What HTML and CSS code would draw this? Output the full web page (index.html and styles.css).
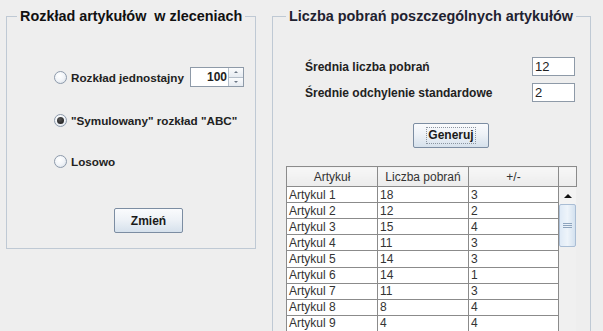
FILE: index.html
```html
<!DOCTYPE html>
<html lang="pl">
<head>
<meta charset="UTF-8" />
<title>Generator zleceń</title>
<link rel="stylesheet" href="styles.css">
</head>
<body>
<div class="window">
  <fieldset class="panel panel-left">
    <legend>Rozkład artykułów&nbsp; w zleceniach</legend>
    <div class="choices">
      <label class="choice row-uniform">
        <span class="radio"></span>
        <span class="choice-text">Rozkład jednostajny</span>
        <span class="spinner">
          <span class="spinner-value">100</span>
          <span class="spinner-arrows">
            <span class="arrow-btn"><span class="tri tri-up"></span></span>
            <span class="arrow-btn"><span class="tri tri-down"></span></span>
          </span>
        </span>
      </label>
      <label class="choice row-abc">
        <span class="radio checked"></span>
        <span class="choice-text">"Symulowany" rozkład "ABC"</span>
      </label>
      <label class="choice row-random">
        <span class="radio"></span>
        <span class="choice-text">Losowo</span>
      </label>
    </div>
    <div class="btn-row btn-row-left">
      <button class="btn btn-change">Zmień</button>
    </div>
  </fieldset>

  <fieldset class="panel panel-right">
    <legend>Liczba pobrań poszczególnych artykułów</legend>
    <div class="params">
      <div class="param">
        <span class="param-label">Średnia liczba pobrań</span>
        <span class="field">12</span>
      </div>
      <div class="param">
        <span class="param-label">Średnie odchylenie standardowe</span>
        <span class="field">2</span>
      </div>
    </div>
    <div class="btn-row btn-row-right">
      <button class="btn btn-generate"><span class="focus">Generuj</span></button>
    </div>
    <table class="grid">
      <colgroup>
        <col class="c1"><col class="c2"><col class="c3"><col class="c4">
      </colgroup>
      <thead>
        <tr><th>Artykuł</th><th>Liczba pobrań</th><th>+/-</th><th class="corner"></th></tr>
      </thead>
      <tbody>
        <tr><td>Artykul 1</td><td>18</td><td>3</td>
          <td class="scroll" rowspan="9">
            <div class="scrollbar">
              <div class="sb-up"><span class="sb-tri"></span></div>
              <div class="sb-thumb"><span class="grip"></span></div>
              <div class="sb-track"></div>
            </div>
          </td></tr>
        <tr><td>Artykul 2</td><td>12</td><td>2</td></tr>
        <tr><td>Artykul 3</td><td>15</td><td>4</td></tr>
        <tr><td>Artykul 4</td><td>11</td><td>3</td></tr>
        <tr><td>Artykul 5</td><td>14</td><td>3</td></tr>
        <tr><td>Artykul 6</td><td>14</td><td>1</td></tr>
        <tr><td>Artykul 7</td><td>11</td><td>3</td></tr>
        <tr><td>Artykul 8</td><td>8</td><td>4</td></tr>
        <tr><td>Artykul 9</td><td>4</td><td>4</td></tr>
      </tbody>
    </table>
  </fieldset>
</div>
</body>
</html>
```

FILE: styles.css
```css
/* Base */
* {
  box-sizing: border-box;
}
body {
  margin: 0;
  background: #eeeeee;
  color: #222222;
  font-family: 'Liberation Sans', Arial, sans-serif;
  font-size: 12px;
  overflow: hidden;
}
.window {
  display: flex;
  align-items: flex-start;
  padding: 8px 0 0 6px;
  gap: 16px;
  height: 331px;
}

/* Titled panels */
.panel {
  margin: 0;
  padding: 0;
  border: 1px solid #bfc9d4;
  min-width: 0;
}
.panel legend {
  font-size: 14.4px;
  font-weight: bold;
  line-height: 16px;
  color: #111111;
  padding: 0 3px;
}
.panel-left {
  width: 250px;
  height: 241px;
}
.panel-left legend {
  margin-left: 10px;
}
.panel-right {
  width: 319px;
  height: 340px;
}
.panel-right legend {
  margin-left: 13px;
  color: #1f2230;
}

/* Radio choices */
.choices {
  display: flex;
  flex-direction: column;
  padding: 43px 0 0 47px;
}
.choice {
  display: flex;
  align-items: center;
  height: 20px;
  font-weight: bold;
  font-size: 11.7px;
  color: #222222;
}
.row-abc {
  margin-top: 23px;
}
.row-random {
  margin-top: 21px;
}
.radio {
  width: 13px;
  height: 13px;
  border-radius: 50%;
  border: 1px solid #8d9aab;
  background: radial-gradient(circle at 40% 35%, #ffffff 0%, #f1f4f8 50%, #d4dbe4 100%);
  margin-right: 4px;
  display: flex;
  align-items: center;
  justify-content: center;
}
.radio.checked::after {
  content: '';
  width: 7px;
  height: 7px;
  border-radius: 50%;
  background: radial-gradient(circle at 40% 35%, #555555, #151515);
}
.choice-text {
  white-space: nowrap;
}
.spinner {
  display: flex;
  height: 20px;
  width: 54px;
  margin-left: 6px;
  border: 1px solid #8e9aa8;
  background: #ffffff;
}
.spinner-value {
  flex: 1;
  text-align: right;
  padding-right: 1px;
  line-height: 18px;
  font-weight: bold;
  font-size: 12px;
}
.spinner-arrows {
  width: 15px;
  display: flex;
  flex-direction: column;
  border-left: 1px solid #b5bfca;
}
.arrow-btn {
  flex: 1;
  display: flex;
  align-items: center;
  justify-content: center;
  background: linear-gradient(#fbfcfd, #e6ebf1);
}
.arrow-btn + .arrow-btn {
  border-top: 1px solid #b5bfca;
}
.tri {
  width: 0;
  height: 0;
  border-left: 2px solid transparent;
  border-right: 2px solid transparent;
}
.tri-up {
  border-bottom: 2px solid #6b7785;
}
.tri-down {
  border-top: 2px solid #6b7785;
}

/* Buttons */
.btn-row {
  display: flex;
}
.btn-row-left {
  padding: 37px 0 0 107px;
}
.btn {
  font-family: inherit;
  font-size: 12px;
  font-weight: bold;
  color: #1a1a1a;
  height: 25px;
  border: 1px solid #7c8da2;
  border-radius: 2px;
  background: linear-gradient(#fafbfd 0%, #eef2f7 45%, #d6e1ec 100%);
  padding: 0;
}
.btn-change {
  width: 69px;
}
.btn-generate {
  width: 76px;
  display: flex;
  align-items: center;
  justify-content: center;
}
.focus {
  border: 1px dotted #8a94a0;
  padding: 1px 1px;
  line-height: 13px;
}
.btn-row-right {
  padding: 21px 0 0 140px;
}

/* Parameters */
.params {
  display: flex;
  flex-direction: column;
  gap: 7px;
  padding: 33px 15px 0 32px;
}
.param {
  display: flex;
  align-items: center;
  justify-content: space-between;
  height: 19px;
  font-weight: bold;
}
.field {
  width: 43px;
  height: 19px;
  border: 1px solid #8e9aa8;
  background: #ffffff;
  font-weight: normal;
  font-size: 13px;
  line-height: 17px;
  padding-left: 2px;
  color: #222222;
}

/* Table */
.grid {
  margin: 18px 0 0 13px;
  border-collapse: collapse;
  table-layout: fixed;
  width: 290px;
  color: #333333;
}
.c1 { width: 91px; }
.c2 { width: 91px; }
.c3 { width: 90px; }
.c4 { width: 18px; }
.grid th {
  height: 20px;
  font-weight: normal;
  text-align: center;
  border: 1px solid #8b8b8b;
  background: linear-gradient(#f7f7f7, #ececec);
  color: #333333;
  padding: 0;
}
.grid td {
  height: 16px;
  padding: 0 2px;
  border: 1px solid #8b8b8b;
  background: #ffffff;
  line-height: 14px;
  white-space: nowrap;
  overflow: hidden;
}
.grid td.scroll {
  padding: 0;
  background: #f1f1f1;
  vertical-align: top;
  border-right-color: #eeeeee;
}
.scrollbar {
  display: flex;
  flex-direction: column;
  height: 144px;
}
.sb-up {
  height: 17px;
  display: flex;
  align-items: center;
  justify-content: center;
  background: #f3f3f3;
}
.sb-tri {
  width: 0;
  height: 0;
  border-left: 4px solid transparent;
  border-right: 4px solid transparent;
  border-bottom: 4px solid #111111;
}
.sb-thumb {
  height: 43px;
  border: 1px solid #a9bdd4;
  border-radius: 2px;
  background: linear-gradient(90deg, #dfeaf6, #eef4fa 50%, #d3e1ef);
  display: flex;
  align-items: center;
  justify-content: center;
}
.grip {
  width: 9px;
  height: 5px;
  border-top: 1px solid #8ea4bd;
  border-bottom: 1px solid #8ea4bd;
  position: relative;
}
.grip::after {
  content: '';
  position: absolute;
  left: 0;
  right: 0;
  top: 1px;
  border-top: 1px solid #8ea4bd;
}
.sb-track {
  flex: 1;
  background: #f0f0f0;
}
```
